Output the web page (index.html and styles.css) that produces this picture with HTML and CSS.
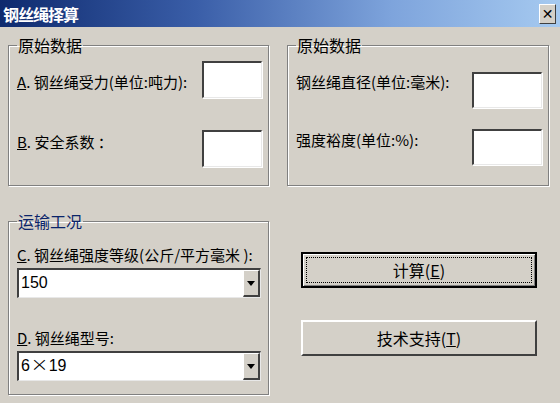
FILE: index.html
```html
<!DOCTYPE html>
<html lang="zh">
<head>
<meta charset="utf-8">
<title>钢丝绳择算</title>
<link rel="stylesheet" href="styles.css">
</head>
<body>
<div class="window">
  <div class="titlebar">
    <span class="title">钢丝绳择算</span>
    <span class="close">✕</span>
  </div>
  <div class="client">
    <div class="row-top">
      <fieldset class="group g1">
        <legend>原始数据</legend>
        <div class="field fa">
          <label><u>A</u>. 钢丝绳受力(单位:吨力):</label>
          <span class="edit e1"></span>
        </div>
        <div class="field fb">
          <label><u>B</u>. 安全系数 ：</label>
          <span class="edit e1"></span>
        </div>
      </fieldset>
      <fieldset class="group g2">
        <legend>原始数据</legend>
        <div class="field fc">
          <label>钢丝绳直径(单位:毫米):</label>
          <span class="edit e2"></span>
        </div>
        <div class="field fd">
          <label>强度裕度(单位:%):</label>
          <span class="edit e2"></span>
        </div>
      </fieldset>
    </div>
    <div class="row-bottom">
      <fieldset class="group g3">
        <legend class="blue">运输工况</legend>
        <label class="lc"><u>C</u>. 钢丝绳强度等级(公斤/平方毫米 ):</label>
        <div class="combo">
          <span class="value">150</span>
          <span class="drop"><span class="tri"></span></span>
        </div>
        <label class="ld"><u>D</u>. 钢丝绳型号:</label>
        <div class="combo">
          <span class="value">6<span class="times">×</span>19</span>
          <span class="drop"><span class="tri"></span></span>
        </div>
      </fieldset>
      <div class="buttons">
        <div class="btn default"><span class="focus">计算(<u>E</u>)</span></div>
        <div class="btn">技术支持(<u>T</u>)</div>
      </div>
    </div>
  </div>
</div>
</body>
</html>
```
FILE: styles.css
```css
html, body {
  margin: 0;
  padding: 0;
}
body {
  width: 560px;
  height: 403px;
  overflow: hidden;
  background: #d4d0c8;
  font-family: "Noto Sans CJK SC", "Liberation Sans", sans-serif;
  font-size: 15px;
  color: #000;
}
.window {
  width: 560px;
  height: 403px;
  background: #d4d0c8;
}
.titlebar {
  height: 27px;
  background: linear-gradient(to right, #0e2a6e 0%, #3a5ea8 35%, #7ea4dc 70%, #a6caf0 100%);
  display: flex;
  align-items: center;
  justify-content: space-between;
  padding: 0 4px 0 3px;
}
.title {
  color: #fff;
  font-weight: bold;
  font-size: 16px;
  letter-spacing: -1px;
}
.close {
  width: 17px;
  height: 20px;
  background: #d4d0c8;
  border-top: 1px solid #fff;
  border-left: 1px solid #fff;
  border-right: 1px solid #404040;
  border-bottom: 1px solid #404040;
  box-sizing: border-box;
  display: flex;
  align-items: center;
  justify-content: center;
  font-size: 14px;
  font-weight: bold;
  font-family: "DejaVu Sans", sans-serif;
  line-height: 1;
  margin-top: 1px;
}
.client {
  padding: 8px 0 0 8px;
}
.row-top {
  display: flex;
}
.row-bottom {
  display: flex;
  margin-top: 25px;
}
.group {
  margin: 0;
  padding: 0;
  border: 1px solid #808080;
  box-shadow: 1px 1px 0 #fff, inset 1px 1px 0 #fff;
  box-sizing: border-box;
}
.group legend {
  margin-left: 0;
  padding: 0 1px;
  line-height: 20px;
  height: 20px;
  font-size: 16px;
}
.group legend.blue {
  color: #0a246a;
}
.g1 {
  width: 261px;
  padding: 6px 6px 18px 8px;
}
.g2 {
  width: 262px;
  margin-left: 18px;
  padding: 17px 6px 19px 8px;
}
.field {
  display: flex;
  justify-content: space-between;
  align-items: flex-start;
}
.field label {
  line-height: 20px;
  white-space: nowrap;
}
.fa label { margin-top: 11px; }
.fb { margin-top: 32px; }
.fb label { margin-top: 2px; }
.fd { margin-top: 21px; }
.fd label { margin-top: 1px; }
.edit {
  display: block;
  background: #fff;
  box-sizing: border-box;
  border-top: 2px solid #404040;
  border-left: 2px solid #404040;
  border-right: 1px solid #e8e8e8;
  border-bottom: 1px solid #e8e8e8;
  box-shadow: 1px 1px 0 #fff;
}
.e1 {
  width: 60px;
  height: 37px;
}
.e2 {
  width: 70px;
  height: 36px;
}
.g3 {
  width: 261px;
  padding: 14px 6px 13px 8px;
}
.g3 label {
  display: block;
  line-height: 20px;
  white-space: nowrap;
}
.ld {
  margin-top: 30px;
}
.combo {
  margin-top: 3px;
  height: 30px;
  width: 244px;
  box-sizing: border-box;
  background: #fff;
  border-top: 2px solid #404040;
  border-left: 2px solid #404040;
  border-right: 1px solid #e8e8e8;
  border-bottom: 1px solid #e8e8e8;
  display: flex;
  align-items: stretch;
}
.value {
  flex: 1;
  padding-left: 2px;
  line-height: 26px;
  font-size: 16px;
  font-family: "Liberation Sans", "Noto Sans CJK SC", sans-serif;
}
.times {
  display: inline-block;
  font-family: "DejaVu Sans", sans-serif;
  font-weight: 300;
  font-size: 20px;
  line-height: 20px;
  transform: scaleX(1.1);
  margin: 0 1px;
}
.drop {
  width: 17px;
  background: #d4d0c8;
  box-sizing: border-box;
  border-top: 1px solid #fff;
  border-left: 1px solid #fff;
  border-right: 2px solid #404040;
  border-bottom: 2px solid #404040;
  display: flex;
  align-items: center;
  justify-content: center;
}
.tri {
  width: 0;
  height: 0;
  border-left: 4px solid transparent;
  border-right: 4px solid transparent;
  border-top: 5px solid #000;
}
.buttons {
  margin-left: 32px;
  padding-top: 41px;
  display: flex;
  flex-direction: column;
  gap: 32px;
}
.btn {
  width: 236px;
  height: 36px;
  box-sizing: border-box;
  background: #d4d0c8;
  border-top: 2px solid #fff;
  border-left: 2px solid #fff;
  border-right: 2px solid #404040;
  border-bottom: 2px solid #404040;
  display: flex;
  align-items: center;
  justify-content: center;
  font-size: 16px;
}
.btn.default {
  border: 2px solid #000;
  box-shadow: inset 1px 1px 0 #fff, inset -1px -1px 0 #808080;
  padding: 3px;
}
.focus {
  flex: 1;
  align-self: stretch;
  border: 1px dotted #000;
  display: flex;
  align-items: center;
  justify-content: center;
}
```
